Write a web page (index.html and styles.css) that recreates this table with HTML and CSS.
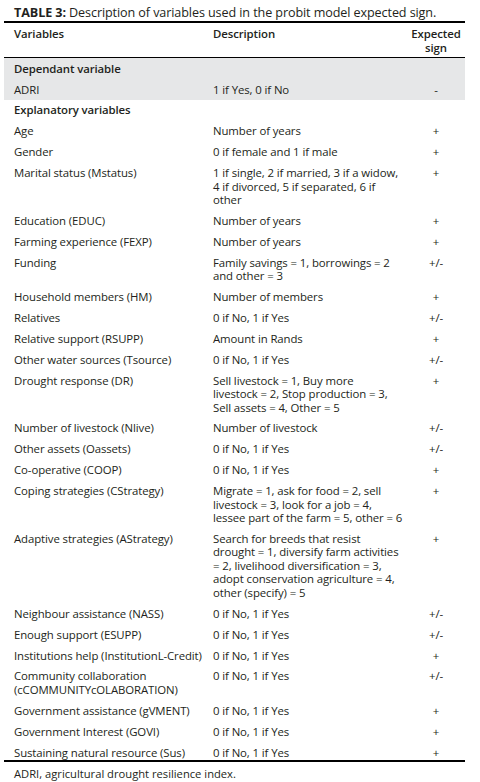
FILE: index.html
```html
<!DOCTYPE html>
<html>
<head>
<meta charset="utf-8">
<link rel="stylesheet" href="styles.css">
</head>
<body>
<div class="page">
  <p class="caption"><b>TABLE 3:</b> Description of variables used in the probit model expected sign.</p>
  <table class="vars">
    <colgroup><col class="c1"><col class="c2"><col class="c3"></colgroup>
    <thead>
      <tr><th class="v">Variables</th><th class="d">Description</th><th class="s">Expected<br>sign</th></tr>
    </thead>
    <tbody>
      <tr class="shade"><td class="v grp" colspan="3">Dependant variable</td></tr>
      <tr class="shade"><td class="v">ADRI</td><td class="d">1 if Yes, 0 if No</td><td class="s">-</td></tr>
      <tr><td class="v grp" colspan="3">Explanatory variables</td></tr>
      <tr><td class="v">Age</td><td class="d">Number of years</td><td class="s">+</td></tr>
      <tr><td class="v">Gender</td><td class="d">0 if female and 1 if male</td><td class="s">+</td></tr>
      <tr><td class="v">Marital status (Mstatus)</td><td class="d">1 if single, 2 if married, 3 if a widow,<br>4 if divorced, 5 if separated, 6 if<br>other</td><td class="s">+</td></tr>
      <tr><td class="v">Education (EDUC)</td><td class="d">Number of years</td><td class="s">+</td></tr>
      <tr><td class="v">Farming experience (FEXP)</td><td class="d">Number of years</td><td class="s">+</td></tr>
      <tr><td class="v">Funding</td><td class="d">Family savings = 1, borrowings = 2<br>and other = 3</td><td class="s">+/-</td></tr>
      <tr><td class="v">Household members (HM)</td><td class="d">Number of members</td><td class="s">+</td></tr>
      <tr><td class="v">Relatives</td><td class="d">0 if No, 1 if Yes</td><td class="s">+/-</td></tr>
      <tr><td class="v">Relative support (RSUPP)</td><td class="d">Amount in Rands</td><td class="s">+</td></tr>
      <tr><td class="v">Other water sources (Tsource)</td><td class="d">0 if No, 1 if Yes</td><td class="s">+/-</td></tr>
      <tr><td class="v">Drought response (DR)</td><td class="d">Sell livestock = 1, Buy more<br>livestock = 2, Stop production = 3,<br>Sell assets = 4, Other = 5</td><td class="s">+</td></tr>
      <tr><td class="v">Number of livestock (Nlive)</td><td class="d">Number of livestock</td><td class="s">+/-</td></tr>
      <tr><td class="v">Other assets (Oassets)</td><td class="d">0 if No, 1 if Yes</td><td class="s">+/-</td></tr>
      <tr><td class="v">Co-operative (COOP)</td><td class="d">0 if No, 1 if Yes</td><td class="s">+</td></tr>
      <tr><td class="v">Coping strategies (CStrategy)</td><td class="d">Migrate = 1, ask for food = 2, sell<br>livestock = 3, look for a job = 4,<br>lessee part of the farm = 5, other = 6</td><td class="s">+</td></tr>
      <tr><td class="v">Adaptive strategies (AStrategy)</td><td class="d">Search for breeds that resist<br>drought = 1, diversify farm activities<br>= 2, livelihood diversification = 3,<br>adopt conservation agriculture = 4,<br>other (specify) = 5</td><td class="s">+</td></tr>
      <tr><td class="v">Neighbour assistance (NASS)</td><td class="d">0 if No, 1 if Yes</td><td class="s">+/-</td></tr>
      <tr><td class="v">Enough support (ESUPP)</td><td class="d">0 if No, 1 if Yes</td><td class="s">+/-</td></tr>
      <tr><td class="v">Institutions help (InstitutionL-Credit)</td><td class="d">0 if No, 1 if Yes</td><td class="s">+</td></tr>
      <tr><td class="v">Community collaboration<br>(cCOMMUNITYcOLABORATION)</td><td class="d">0 if No, 1 if Yes</td><td class="s">+/-</td></tr>
      <tr><td class="v">Government assistance (gVMENT)</td><td class="d">0 if No, 1 if Yes</td><td class="s">+</td></tr>
      <tr><td class="v">Government Interest (GOVI)</td><td class="d">0 if No, 1 if Yes</td><td class="s">+</td></tr>
      <tr class="last"><td class="v">Sustaining natural resource (Sus)</td><td class="d">0 if No, 1 if Yes</td><td class="s">+</td></tr>
    </tbody>
  </table>
  <p class="note">ADRI, agricultural drought resilience index.</p>
</div>
</body>
</html>
```
FILE: styles.css
```css
html, body {
  margin: 0;
  padding: 0;
  background: #ffffff;
}
body {
  font-family: "Open Sans", Lato, sans-serif;
  color: #231f20;
}
.page {
  width: 461px;
  padding: 5px 0 0 4px;
}
.caption {
  margin: 0;
  padding-left: 10px;
  font-size: 12.6px;
  line-height: 16px;
  white-space: nowrap;
  letter-spacing: -0.1px;
}
.vars {
  width: 461px;
  border-collapse: collapse;
  table-layout: fixed;
  font-size: 11.4px;
  line-height: 13.5px;
  border-top: 2px solid #000;
  border-bottom: 2px solid #000;
  letter-spacing: -0.1px;
}
.c1 { width: 209px; }
.c2 { width: 197px; }
.c3 { width: 55px; }
.vars th {
  font-weight: 600;
  text-align: left;
  vertical-align: top;
  padding: 4px 0 3px 0;
  border-bottom: 1px solid #000;
}
.vars td {
  vertical-align: top;
  padding: 3.7px 0 3.7px 0;
}
.vars .v {
  padding-left: 10px;
  white-space: nowrap;
}
.vars .s {
  text-align: center;
  padding-right: 3px;
}
.vars th.s {
  text-align: center;
}
.vars .grp {
  font-weight: 600;
}
.vars tr.shade td {
  background: #e6e7e8;
}
.vars tr.last td {
  padding-top: 4px;
  padding-bottom: 0.5px;
}
.note {
  margin: 0;
  padding: 5px 0 0 10px;
  font-size: 11.2px;
  line-height: 14px;
}
```
